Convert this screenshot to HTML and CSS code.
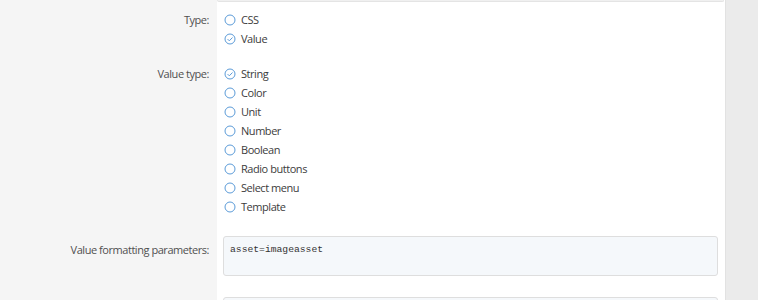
FILE: index.html
```html
<!DOCTYPE html>
<html lang="en">
<head>
  <meta charset="UTF-8" />
  <title>Style property</title>
  <link rel="stylesheet" href="styles.css">
</head>
<body>

  <div class="form-block">
    <div class="form-row row-stub">
      <div class="form-label"></div>
      <div class="form-input"><div class="input-stub"></div></div>
    </div>

    <div class="form-row">
      <div class="form-label">Type:</div>
      <div class="form-input">
        <ul class="choice-list">
          <li><span class="radio"></span>CSS</li>
          <li><span class="radio checked"></span>Value</li>
        </ul>
      </div>
    </div>

    <div class="form-row">
      <div class="form-label">Value type:</div>
      <div class="form-input">
        <ul class="choice-list">
          <li><span class="radio checked"></span>String</li>
          <li><span class="radio"></span>Color</li>
          <li><span class="radio"></span>Unit</li>
          <li><span class="radio"></span>Number</li>
          <li><span class="radio"></span>Boolean</li>
          <li><span class="radio"></span>Radio buttons</li>
          <li><span class="radio"></span>Select menu</li>
          <li><span class="radio"></span>Template</li>
        </ul>
      </div>
    </div>

    <div class="form-row row-text">
      <div class="form-label">Value formatting parameters:</div>
      <div class="form-input">
        <div class="code-box">asset=imageasset</div>
      </div>
    </div>

    <div class="form-row">
      <div class="form-label"></div>
      <div class="form-input"><div class="code-box"></div></div>
    </div>
  </div>

  <script>
    // draw the radio icons
    const ring = '<svg width="12" height="12" viewBox="0 0 12 12"><circle cx="6" cy="6" r="5" fill="none" stroke="#5b9bd8" stroke-width="1"/></svg>';
    const tick = '<svg width="12" height="12" viewBox="0 0 12 12"><circle cx="6" cy="6" r="5" fill="none" stroke="#5b9bd8" stroke-width="1"/><path d="M3.6 6.1 L5.3 7.8 L8.5 4.5" fill="none" stroke="#5b9bd8" stroke-width="1"/></svg>';
    document.querySelectorAll(".radio").forEach(r => {
      r.innerHTML = r.classList.contains("checked") ? tick : ring;
    });
  </script>
</body>
</html>
```

FILE: styles.css
```css
body {
  margin: 0;
  background: #ebebeb;
  font-family: "Open Sans", sans-serif;
  font-size: 11px;
  letter-spacing: -0.45px;
  color: #3c3c3c;
  height: 300px;
  overflow: hidden;
}

.form-block {
  width: 725px;
  height: 300px;
  border-right: 1px solid #e2e2e2;
  background: #fff;
}

.form-row {
  display: flex;
}

.form-label {
  width: 217px;
  flex-shrink: 0;
  box-sizing: border-box;
  padding: 8px 8px 8px 0;
  text-align: right;
  line-height: 19px;
  color: #505050;
  background: #f5f5f5;
}

.form-input {
  flex: 1;
  padding: 8px 7px 8px 6px;
}

.row-stub .form-label,
.row-stub .form-input {
  padding: 0;
}

.input-stub {
  height: 1px;
  margin-right: 1px;
  border: 1px solid #e4e4e4;
  border-top: none;
  border-radius: 0 0 3px 3px;
  background: #f0f0f0;
}

.choice-list {
  list-style: none;
  margin: 0;
  padding: 0;
}

.choice-list li {
  display: flex;
  align-items: center;
  height: 19px;
  line-height: 18px;
}

.radio {
  width: 12px;
  height: 12px;
  margin: 0 5px 0 1px;
  display: flex;
}

.row-text .form-label {
  padding-top: 16px;
}

.row-text .form-input {
  padding-top: 12px;
  padding-bottom: 13px;
}

.code-box {
  box-sizing: border-box;
  height: 40px;
  padding: 5px 6px;
  border: 1px solid #dedede;
  border-radius: 3px;
  background: #f5f8fb;
  font-family: "Liberation Mono", monospace;
  font-size: 9.7px;
  letter-spacing: 0;
  line-height: 15px;
  color: #333;
}
```
